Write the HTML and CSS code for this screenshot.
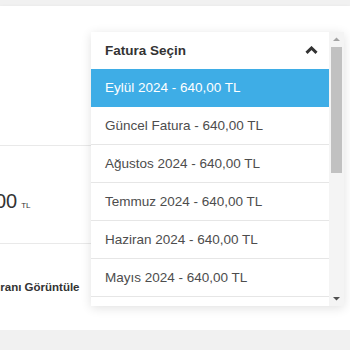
FILE: index.html
```html
<!DOCTYPE html>
<html>
  <head>
    <meta charset="utf-8">
    <link rel="stylesheet" href="styles.css">
  </head>
  <body>
    <div class="card">
      <div class="summary">
        <div class="summary-row top"></div>
        <div class="summary-row amount">
          <span class="value">640,00</span><span class="unit">TL</span>
        </div>
        <div class="summary-row action">
          <span class="link">Faturanı Görüntüle</span>
        </div>
      </div>

      <div class="picker">
        <div class="picker-body">
          <div class="picker-head">
            <span>Fatura Seçin</span>
            <svg class="caret" width="13" height="8" viewBox="0 0 13 8">
              <polyline points="1.5,6.8 6.5,2 11.5,6.8" fill="none" stroke="#333" stroke-width="3"/>
            </svg>
          </div>
          <ul class="picker-list">
            <li class="active">Eylül 2024 - 640,00 TL</li>
            <li>Güncel Fatura - 640,00 TL</li>
            <li>Ağustos 2024 - 640,00 TL</li>
            <li>Temmuz 2024 - 640,00 TL</li>
            <li>Haziran 2024 - 640,00 TL</li>
            <li>Mayıs 2024 - 640,00 TL</li>
            <li>Nisan 2024 - 640,00 TL</li>
            <li>Mart 2024 - 640,00 TL</li>
            <li>Şubat 2024 - 640,00 TL</li>
            <li>Ocak 2024 - 640,00 TL</li>
          </ul>
        </div>
        <div class="scrollbar">
          <svg class="scroll-btn" width="15" height="15" viewBox="0 0 15 15">
            <polygon points="4,9 11,9 7.5,5.5" fill="#a3a3a3"/>
          </svg>
          <div class="scroll-track">
            <div class="scroll-thumb"></div>
          </div>
          <svg class="scroll-btn" width="15" height="15" viewBox="0 0 15 15">
            <polygon points="4,6 11,6 7.5,9.5" fill="#505050"/>
          </svg>
        </div>
      </div>
    </div>
  </body>
</html>
```

FILE: styles.css
```css
body {
  margin: 0;
  background: #f1f1f1;
  font-family: "Liberation Sans", Arial, sans-serif;
  overflow: hidden;
}

.card {
  position: relative;
  margin-top: 6px;
  height: 324px;
  background: #fff;
  box-shadow: 0 1px 4px rgba(0, 0, 0, 0.07);
}

/* left column, mostly hidden under the dropdown */
.summary {
  margin-left: -44px;
  width: 200px;
}
.summary-row {
  border-bottom: 1px solid #e9e9e9;
  display: flex;
  align-items: center;
}
.summary-row.top {
  height: 139px;
}
.summary-row.amount {
  height: 98px;
  align-items: baseline;
  padding-top: 44px;
  box-sizing: border-box;
}
.summary-row.action {
  height: 86px;
  border-bottom: none;
}
.value {
  font-size: 20px;
  color: #333;
}
.unit {
  font-size: 8px;
  color: #333;
  margin-left: 4px;
}
.link {
  padding-left: 20px;
  font-size: 11.5px;
  font-weight: bold;
  color: #333;
}

/* dropdown */
.picker {
  position: absolute;
  left: 91px;
  top: 26px;
  width: 253px;
  height: 274px;
  display: flex;
  background: #fff;
  box-shadow: 0 2px 10px rgba(0, 0, 0, 0.12);
}
.picker-body {
  flex: 1;
  overflow: hidden;
}
.scrollbar {
  width: 15px;
  display: flex;
  flex-direction: column;
  background: #f4f4f4;
}
.scroll-btn {
  display: block;
  flex: none;
}
.scroll-track {
  flex: 1;
  padding: 0 2px;
}
.scroll-thumb {
  height: 126px;
  background: #c1c1c1;
}

.picker-head {
  height: 37px;
  padding: 0 11px 0 14px;
  display: flex;
  align-items: center;
  justify-content: space-between;
  font-size: 13.5px;
  font-weight: bold;
  color: #333;
}
.caret {
  display: block;
  margin-top: -1px;
}
.picker-list {
  list-style: none;
  margin: 0;
  padding: 0;
}
.picker-list li {
  height: 37px;
  line-height: 37px;
  padding-left: 14px;
  border-bottom: 1px solid #e6e6e6;
  font-size: 13.5px;
  color: #4d4d4d;
}
.picker-list li.active {
  background: #3eade6;
  color: #fff;
  border-bottom-color: #3eade6;
}
```
